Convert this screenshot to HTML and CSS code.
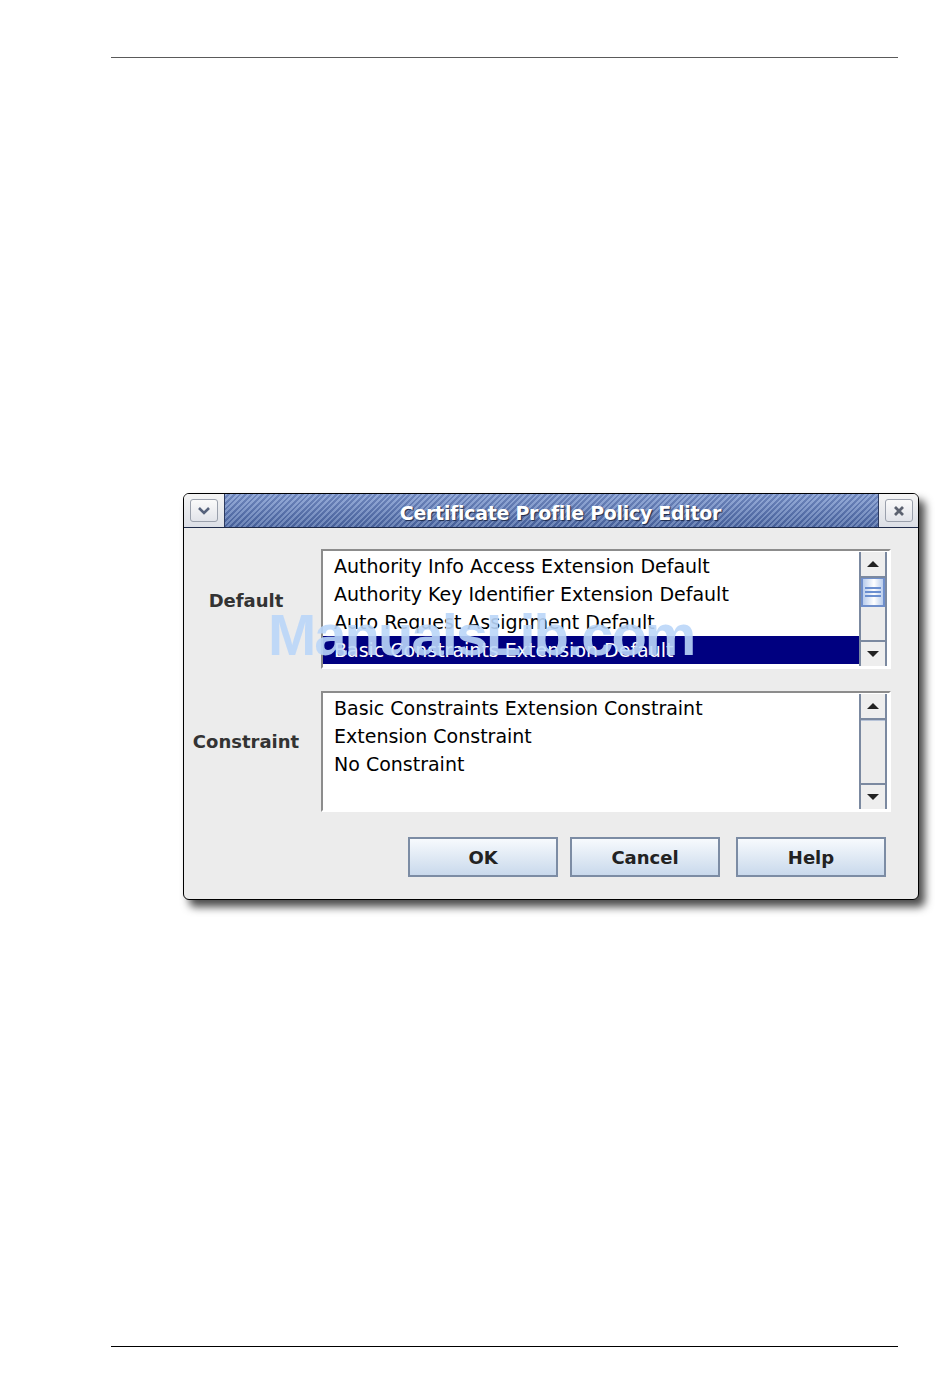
FILE: index.html
```html
<!DOCTYPE html>
<html lang="en">
<head>
    <meta charset="UTF-8">
    <title>Certificate Profile Policy Editor</title>
    <link rel="stylesheet" href="styles.css">
</head>
<body>
    <div class="page">
        <div class="rule rule-top"></div>

        <!-- Policy editor dialog -->
        <div class="dialog">
            <div class="titlebar">
                <div class="tb-side">
                    <span class="tb-btn">
                        <svg width="14" height="10" viewBox="0 0 14 10"><path d="M2 2 L7 7 L12 2" fill="none" stroke="#56627c" stroke-width="2.6"/></svg>
                    </span>
                </div>
                <div class="tb-title">Certificate Profile Policy Editor</div>
                <div class="tb-side tb-right">
                    <span class="tb-btn">
                        <svg width="12" height="12" viewBox="0 0 12 12"><path d="M2 2 L10 10 M10 2 L2 10" fill="none" stroke="#5c6270" stroke-width="2.8"/></svg>
                    </span>
                </div>
            </div>

            <div class="dialog-body">
                <div class="field">
                    <label class="field-label">Default</label>
                    <div class="listbox">
                        <ul class="items">
                            <li>Authority Info Access Extension Default</li>
                            <li>Authority Key Identifier Extension Default</li>
                            <li>Auto Request Assignment Default</li>
                            <li class="selected">Basic Constraints Extension Default</li>
                        </ul>
                        <div class="scrollbar">
                            <div class="sb-btn sb-up"><span class="arrow-up"></span></div>
                            <div class="sb-thumb"><span></span><span></span><span></span></div>
                            <div class="sb-track"></div>
                            <div class="sb-btn sb-down"><span class="arrow-down"></span></div>
                        </div>
                    </div>
                </div>

                <div class="field field-constraint">
                    <label class="field-label">Constraint</label>
                    <div class="listbox listbox-tall">
                        <ul class="items">
                            <li>Basic Constraints Extension Constraint</li>
                            <li>Extension Constraint</li>
                            <li>No Constraint</li>
                        </ul>
                        <div class="scrollbar">
                            <div class="sb-btn sb-up"><span class="arrow-up"></span></div>
                            <div class="sb-track sb-track-empty"></div>
                            <div class="sb-btn sb-down"><span class="arrow-down"></span></div>
                        </div>
                    </div>
                </div>

                <div class="buttons">
                    <button class="btn">OK</button>
                    <button class="btn">Cancel</button>
                    <button class="btn btn-help">Help</button>
                </div>
            </div>
        </div>

        <div class="rule rule-bottom"></div>

        <div class="watermark">ManualsLib.com</div>
    </div>
</body>
</html>
```

FILE: styles.css
```css
/* Plain white page */
body {
    margin: 0;
    background: #fff;
    font-family: "DejaVu Sans", sans-serif;
}

.page {
    position: relative;
    width: 950px;
    height: 1379px;
    overflow: hidden;
}

/* Header and footer rules */
.rule {
    width: 787px;
    height: 1px;
    margin-left: 111px;
}

.rule-top {
    margin-top: 57px;
    background: #5a5a5a;
}

.rule-bottom {
    margin-top: 446px;
    background: #000;
}

/* Dialog window */
.dialog {
    margin: 435px 0 0 183px;
    width: 736px;
    box-sizing: border-box;
    border: 1px solid #000;
    border-radius: 6px;
    background: #ececec;
    box-shadow: 6px 7px 8px rgba(0, 0, 0, 0.7);
    overflow: hidden;
}

.titlebar {
    display: flex;
    height: 33px;
    border-bottom: 1px solid #1e2a48;
}

.tb-side {
    width: 40px;
    display: flex;
    align-items: center;
    justify-content: center;
    background: linear-gradient(#f4f4f4, #dcdfe6);
    border-right: 1px solid #2c3a60;
}

.tb-right {
    width: 39px;
    border-right: none;
    border-left: 1px solid #2c3a60;
}

.tb-btn {
    width: 26px;
    height: 21px;
    display: flex;
    align-items: center;
    justify-content: center;
    border: 1px solid #9aa0ac;
    border-radius: 3px;
    background: linear-gradient(#fafafa, #e2e4ea);
}

.tb-title {
    flex: 1;
    display: flex;
    align-items: center;
    justify-content: center;
    padding: 4px 0 0 18px;
    color: #fff;
    font-weight: bold;
    font-size: 19px;
    letter-spacing: -0.3px;
    text-shadow: 1px 1px 1px #1c2848;
    background:
        linear-gradient(rgba(255, 255, 255, 0.18), rgba(0, 0, 0, 0.12)),
        repeating-linear-gradient(135deg, #7d98d0 0 2px, #4f6cae 2px 4px);
}

/* Dialog content */
.dialog-body {
    padding: 21px 27px 22px 8px;
}

.field {
    display: flex;
    align-items: center;
    gap: 21px;
}

.field-constraint {
    margin-top: 22px;
}

.field-label {
    width: 108px;
    text-align: center;
    font-weight: bold;
    font-size: 18px;
    color: #333;
    padding-bottom: 17px;
}

.field-constraint .field-label {
    padding-bottom: 21px;
}

/* List boxes */
.listbox {
    flex: 1;
    display: flex;
    height: 120px;
    box-sizing: border-box;
    border: 2px solid #fff;
    border-top-color: #8c8c8c;
    border-left-color: #8c8c8c;
    background: #fff;
}

.listbox-tall {
    height: 121px;
}

.items {
    flex: 1;
    list-style: none;
    margin: 0;
    padding: 1px 0 0;
}

.items li {
    height: 28px;
    line-height: 28px;
    padding-left: 11px;
    font-size: 19px;
    color: #000;
    white-space: nowrap;
}

.items li.selected {
    background: #000080;
    color: #fff;
}

/* Scrollbar */
.scrollbar {
    width: 28px;
    margin: 1px 2px 1px 0;
    box-sizing: border-box;
    border-left: 2px solid #7b89a0;
    border-right: 2px solid #7b89a0;
    display: flex;
    flex-direction: column;
    background: #ececec;
}

.sb-btn {
    height: 24px;
    display: flex;
    align-items: center;
    justify-content: center;
    background: #eeeeee;
}

.sb-up {
    border-bottom: 2px solid #7b89a0;
}

.sb-down {
    border-top: 2px solid #7b89a0;
}

.arrow-up {
    width: 0;
    height: 0;
    border-left: 6px solid transparent;
    border-right: 6px solid transparent;
    border-bottom: 6px solid #222;
}

.arrow-down {
    width: 0;
    height: 0;
    border-left: 6px solid transparent;
    border-right: 6px solid transparent;
    border-top: 6px solid #222;
}

.sb-thumb {
    height: 26px;
    border: 2px solid #6f8fcc;
    border-top-width: 1px;
    display: flex;
    flex-direction: column;
    align-items: center;
    justify-content: center;
    gap: 2px;
    background: linear-gradient(90deg, #b8ccec, #ffffff 55%, #b8ccec);
}

.sb-thumb span {
    width: 16px;
    height: 2px;
    background: #6b8fd0;
}

.sb-track {
    flex: 1;
    background: #ececec;
}

.sb-track-empty {
    border-top: 1px solid #b8c4d8;
}

/* Action buttons */
.buttons {
    display: flex;
    justify-content: flex-end;
    gap: 12px;
    margin-top: 25px;
    padding-right: 5px;
}

.btn {
    width: 150px;
    height: 40px;
    border: 2px solid #7c8ca4;
    background: linear-gradient(#f7fafd, #c9d9ec);
    font-family: "DejaVu Sans", sans-serif;
    font-weight: bold;
    font-size: 18px;
    color: #222;
    padding: 0;
}

.btn-help {
    margin-left: 4px;
}

/* Site watermark drawn over the screenshot */
.watermark {
    position: absolute;
    left: 268px;
    top: 606px;
    line-height: 1;
    font-family: "Liberation Sans", Arial, sans-serif;
    font-weight: bold;
    font-size: 58px;
    letter-spacing: -2px;
    color: rgba(186, 214, 248, 0.9);
}
```
